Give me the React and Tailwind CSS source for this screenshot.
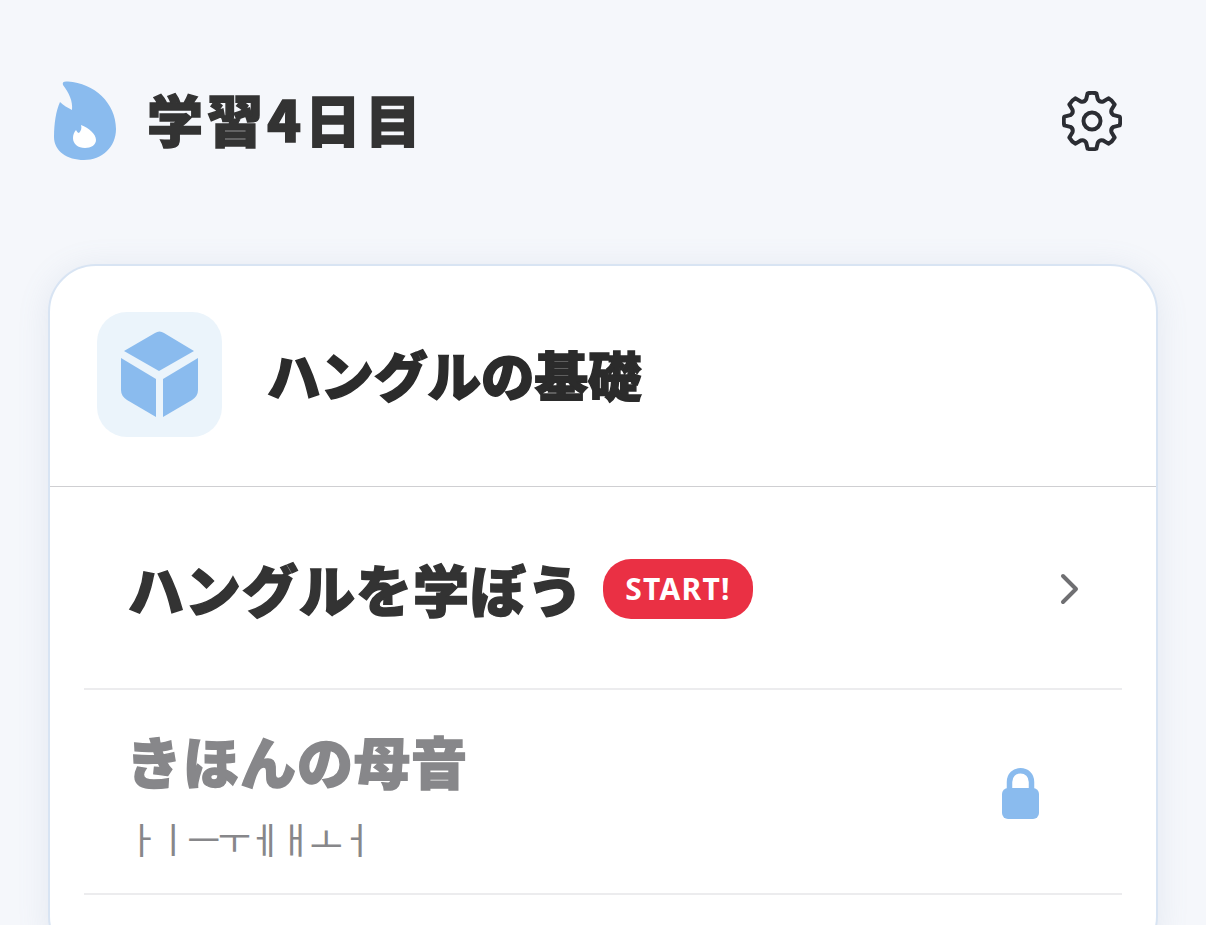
const JP = "font-['Noto_Sans_CJK_JP','Noto_Sans_CJK_KR',sans-serif]";

const Flame = () => (
  <svg viewBox="0 0 64 80" className="w-[64px] h-[80px]">
    <path
      fill="#8abbee"
      d="M9 4 C8 1 10 0 14 0.5 C40 2 62 22 62 48 C62 66 48 79 30 79 C13 79 0 70 0 56 C0 42 2 30 6 21 C9 24 14 27 18 29 C19 20 15 12 9 4 Z"
    />
    <path
      fill="#ffffff"
      d="M27 44 C35 47 42 53 42 59 C42 64 37 67 31 67 C24 67 19 63 19 57 C19 54 20 51 22 49 C23 51 24 52 25 52 C27 50 28 47 27 44 Z"
    />
  </svg>
);

const Cube = () => (
  <svg viewBox="0 0 78 86" className="w-[78px] h-[86px]">
    <path fill="#8abbee" d="M34 2 Q38.5 -1 43 2 L73 20 L38 40 L3 20 Z" />
    <path fill="#8abbee" d="M0 27 L35 48 L35 86 L6 69 Q0 65 0 59 Z" />
    <path fill="#8abbee" d="M77 27 L42 48 L42 86 L71 69 Q77 65 77 59 Z" />
  </svg>
);

// 8 tooth gear, the path is worked out from the angles
const gearPath = () => {
  const pt = (r, deg) => {
    const a = ((deg - 90) * Math.PI) / 180;
    return `${(30 + r * Math.cos(a)).toFixed(2)} ${(30 + r * Math.sin(a)).toFixed(2)}`;
  };
  let d = "";
  for (let i = 0; i < 8; i++) {
    const c = i * 45;
    d += `${i === 0 ? "M" : "L"}${pt(22.5, c - 15)} L${pt(28, c - 9)} Q${pt(29, c)} ${pt(28, c + 9)} L${pt(22.5, c + 15)} Q${pt(20, c + 22.5)} ${pt(22.5, c + 30)} `;
  }
  return d + "Z";
};

const Gear = () => (
  <svg viewBox="0 0 60 60" fill="none" stroke="#2b2d33" strokeWidth="4" strokeLinejoin="round" className="w-[60px] h-[60px]">
    <path d={gearPath()} />
    <circle cx="30" cy="30" r="8.5" />
  </svg>
);

const Lock = () => (
  <svg viewBox="0 0 37 51" className="w-[37px] h-[51px]">
    <path fill="none" stroke="#8abbee" strokeWidth="5.5" d="M7.5 24 V14 C7.5 7 12.5 2.75 18.5 2.75 C24.5 2.75 29.5 7 29.5 14 V24" />
    <rect x="0" y="20" width="37" height="31" rx="6" fill="#8abbee" />
  </svg>
);

const Chevron = () => (
  <svg viewBox="0 0 20 32" fill="none" stroke="#6f6f72" strokeWidth="4" strokeLinecap="round" strokeLinejoin="round" className="w-[20px] h-[32px]">
    <path d="M3 3 L16 16 L3 29" />
  </svg>
);

export default function App() {
  return (
    <div className={`h-[925px] overflow-hidden bg-[#f5f7fb] px-12 ${JP}`}>
      {/* header */}
      <div className="flex items-center justify-between h-[242px] pl-[6px] pr-[36px]">
        <div className="flex items-center gap-[29px]">
          <Flame />
          <h1 className="pb-[6px] text-[56px] leading-none tracking-[4px] font-black text-[#333333] [-webkit-text-stroke:1.5px_#333333]">学習4日目</h1>
        </div>
        <Gear />
      </div>

      {/* card */}
      <div className="mt-[22px] w-[1110px] h-[700px] bg-white border-2 border-[#d8e4f3] rounded-[48px] shadow-[0_4px_32px_rgba(120,140,180,0.14)]">
        <div className="flex items-center gap-[45px] h-[221px] pb-[4px] pl-[47px] border-b border-[#cfcfd2]">
          <div className="w-[125px] h-[125px] rounded-[30px] bg-[#ebf4fb] flex items-center justify-center">
            <Cube />
          </div>
          <h2 className="text-[53.5px] leading-none font-black text-[#2b2b2b] [-webkit-text-stroke:1.5px_#2b2b2b]">ハングルの基礎</h2>
        </div>

        <div className="px-[34px]">
          <div className="flex items-center justify-between h-[203px] border-b-2 border-[#ececee] pl-[44px] pr-[42px]">
            <div className="flex items-center gap-[19px]">
              <span className="text-[56px] leading-none tracking-[1px] font-black text-[#333333] [-webkit-text-stroke:1.5px_#333333]">ハングルを学ぼう</span>
              <span className="mt-[2px] flex items-center justify-center w-[150px] h-[60px] rounded-[28px] bg-[#ea3044] text-white text-[30px] font-bold tracking-[1.3px] font-['Noto_Sans',sans-serif]">START!</span>
            </div>
            <div className="mt-[2px]">
              <Chevron />
            </div>
          </div>

          <div className="flex items-center justify-between h-[205px] border-b-2 border-[#ececee] pl-[44px] pr-[83px]">
            <div className="flex flex-col gap-[32px] pt-[4px]">
              <span className="-ml-[2px] text-[56px] leading-none tracking-[1px] font-black text-[#87878a] [-webkit-text-stroke:1.5px_#87878a]">きほんの母音</span>
              <span className="-ml-[2px] text-[36px] leading-none font-normal text-[#87878a] tracking-[-2.5px] font-['Noto_Sans_CJK_KR',sans-serif]">ㅏㅣㅡㅜㅔㅐㅗㅓ</span>
            </div>
            <div className="mt-[4px]">
              <Lock />
            </div>
          </div>
        </div>
      </div>
    </div>
  );
}
